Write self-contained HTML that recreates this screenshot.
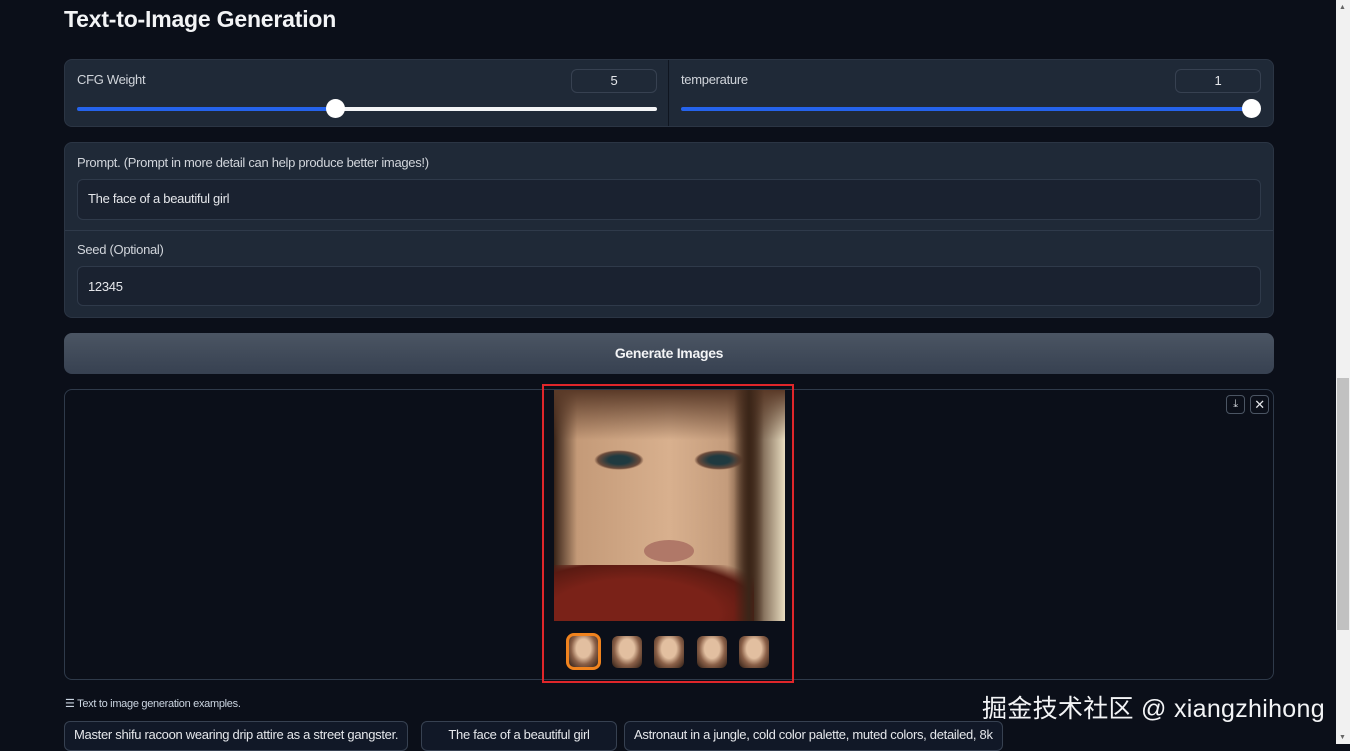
<!DOCTYPE html>
<html><head><meta charset="utf-8"><style>
*{box-sizing:border-box;margin:0;padding:0}
body{width:1350px;height:744px;background:#0b0f19;font-family:"Liberation Sans","Noto Sans CJK SC",sans-serif;color:#e5e7eb;overflow:hidden;position:relative;font-size:13px;letter-spacing:-0.3px}
.abs{position:absolute}
h1{position:absolute;left:64px;top:6px;font-size:23px;font-weight:bold;color:#f3f4f6;letter-spacing:-0.2px}
.panel{position:absolute;background:#1f2937;border:1px solid #2b3544;border-radius:8px}
.lbl{position:absolute;font-size:13px;color:#d1d5db}
.num{position:absolute;border:1px solid #374151;border-radius:6px;background:#1f2937;text-align:center;font-size:13px;line-height:22px;color:#e5e7eb}
.track{position:absolute;height:4px;border-radius:2px}
.knob{position:absolute;width:19px;height:19px;border-radius:50%;background:#fff}
.inp{position:absolute;background:#1a2230;border:1px solid #2f3a4a;border-radius:6px;padding-left:10px;font-size:13px;color:#e5e7eb}
.thumb{position:absolute;top:636px;width:30px;height:32px;border-radius:6px;background:radial-gradient(ellipse at 50% 40%,#e2bfa0 0 35%,#8a6048 60%,#2a1a12 100%)}
.ex{position:absolute;top:721px;height:30px;border:1px solid #374151;border-radius:6px;background:#111827;font-size:13px;line-height:26px;padding:0 9px;color:#e5e7eb}
</style></head><body>
<h1>Text-to-Image Generation</h1>

<div class="panel" style="left:64px;top:59px;width:1210px;height:68px"></div>
<div class="abs" style="left:668px;top:60px;width:1px;height:66px;background:#0f1520"></div>
<div class="lbl" style="left:77px;top:72px">CFG Weight</div>
<div class="num" style="left:571px;top:69px;width:86px;height:24px">5</div>
<div class="track" style="left:77px;top:107px;width:258px;background:#2563eb"></div>
<div class="track" style="left:335px;top:107px;width:322px;background:#f3f4f6"></div>
<div class="knob" style="left:326px;top:99px"></div>
<div class="lbl" style="left:681px;top:72px">temperature</div>
<div class="num" style="left:1175px;top:69px;width:86px;height:24px">1</div>
<div class="track" style="left:681px;top:107px;width:570px;background:#2563eb"></div>
<div class="knob" style="left:1242px;top:99px"></div>

<div class="panel" style="left:64px;top:142px;width:1210px;height:176px"></div>
<div class="abs" style="left:65px;top:230px;width:1208px;height:1px;background:#2f3a4a"></div>
<div class="lbl" style="left:77px;top:155px">Prompt. (Prompt in more detail can help produce better images!)</div>
<div class="inp" style="left:77px;top:179px;width:1184px;height:41px;line-height:38px">The face of a beautiful girl</div>
<div class="lbl" style="left:77px;top:242px">Seed (Optional)</div>
<div class="inp" style="left:77px;top:266px;width:1184px;height:40px;line-height:40px">12345</div>

<div class="abs" style="left:64px;top:333px;width:1210px;height:41px;border-radius:8px;background:linear-gradient(#4b5563,#374151);text-align:center;line-height:41px;font-weight:bold;font-size:14px;color:#f3f4f6">Generate Images</div>

<div class="abs" style="left:64px;top:389px;width:1210px;height:291px;border:1px solid #2f3a4a;border-radius:8px;background:#0b0f19"></div>
<div class="abs" style="left:1226px;top:395px;width:19px;height:19px;border:1px solid #4b5563;border-radius:4px;color:#d1d5db;font-size:11px;text-align:center;line-height:17px">⤓</div>
<div class="abs" style="left:1250px;top:395px;width:19px;height:19px;border:1px solid #4b5563;border-radius:4px;color:#e5e7eb;font-size:13px;text-align:center;line-height:17px">✕</div>

<div class="abs" style="left:554px;top:390px;width:231px;height:231px;overflow:hidden;background:linear-gradient(90deg,#3a2418 0%,#c49a78 10%,#d8b08e 50%,#c49c7c 75%,#4a3020 85%,#e8dcc0 100%)">
  <div class="abs" style="left:0;top:0;width:231px;height:50px;background:linear-gradient(#5a3a28,rgba(160,110,80,0))"></div>
  <div class="abs" style="left:40px;top:60px;width:50px;height:20px;border-radius:50%;background:radial-gradient(#1f3a40 0 30%,#6a4a3a 60%,rgba(0,0,0,0) 70%)"></div>
  <div class="abs" style="left:140px;top:60px;width:50px;height:20px;border-radius:50%;background:radial-gradient(#1f3a40 0 30%,#6a4a3a 60%,rgba(0,0,0,0) 70%)"></div>
  <div class="abs" style="left:90px;top:150px;width:50px;height:22px;border-radius:50%;background:#b07868"></div>
  <div class="abs" style="left:0;top:175px;width:200px;height:60px;background:radial-gradient(ellipse at 40% 80%,#7a2218 0 50%,#5a1a12 75%,rgba(0,0,0,0) 90%)"></div>
  <div class="abs" style="left:180px;top:0;width:30px;height:231px;background:linear-gradient(90deg,rgba(0,0,0,0),#3a2518,rgba(0,0,0,0))"></div>
</div>
<div class="thumb" style="left:566px;top:633px;width:35px;height:37px;border:3px solid #f0831e;border-radius:8px"></div>
<div class="thumb" style="left:612px"></div>
<div class="thumb" style="left:654px"></div>
<div class="thumb" style="left:697px"></div>
<div class="thumb" style="left:739px"></div>
<div class="abs" style="left:542px;top:384px;width:252px;height:299px;border:2px solid #e0262a"></div>

<div class="abs" style="left:65px;top:697px;font-size:11px;color:#cbd5e1">☰ Text to image generation examples.</div>
<div class="ex" style="left:64px">Master shifu racoon wearing drip attire as a street gangster.</div>
<div class="ex" style="left:421px;width:196px;text-align:center">The face of a beautiful girl</div>
<div class="ex" style="left:624px">Astronaut in a jungle, cold color palette, muted colors, detailed, 8k</div>
<div class="abs" style="left:982px;top:689px;font-size:25px;color:#f3f4f6;letter-spacing:0.3px">掘金技术社区 @ xiangzhihong</div>

<div class="abs" style="left:1336px;top:0;width:14px;height:744px;background:#f1f1f1"></div>
<div class="abs" style="left:1337px;top:378px;width:12px;height:252px;background:#c1c1c1"></div>
<div class="abs" style="left:1339px;top:4px;font-size:7px;color:#666">▲</div>
<div class="abs" style="left:1339px;top:734px;font-size:7px;color:#666">▼</div>
</body></html>
